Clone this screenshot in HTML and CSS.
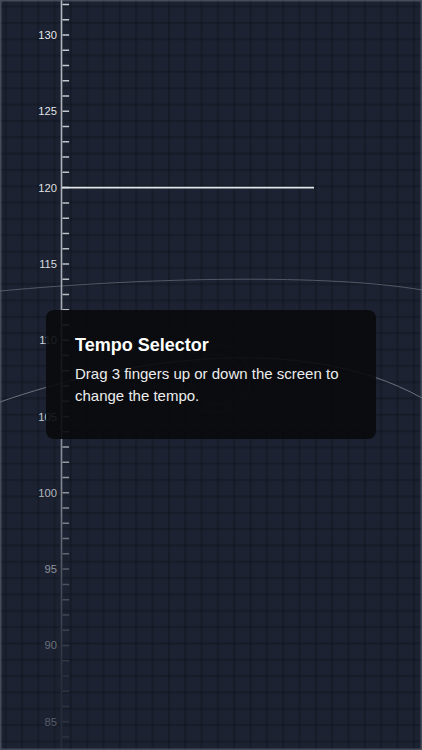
FILE: index.html
```html
<!DOCTYPE html>
<html>
<head>
<meta charset="utf-8">
<link rel="stylesheet" href="styles.css">
</head>
<body>
<div class="screen">
  <svg class="chart" width="422" height="750" viewBox="0 0 422 750">
    <defs>
      <linearGradient id="fadeText" gradientUnits="userSpaceOnUse" x1="0" y1="0" x2="0" y2="750">
        <stop offset="0" stop-color="#eceef1"/>
        <stop offset="0.3" stop-color="#e2e4e8"/>
        <stop offset="0.56" stop-color="#c9ccd2"/>
        <stop offset="0.66" stop-color="#b2b6be"/>
        <stop offset="0.76" stop-color="#8d929c"/>
        <stop offset="0.86" stop-color="#6a707c"/>
        <stop offset="0.97" stop-color="#535968"/>
      </linearGradient>
      <linearGradient id="fadeLine" gradientUnits="userSpaceOnUse" x1="0" y1="0" x2="0" y2="750">
        <stop offset="0" stop-color="#b4b8bf"/>
        <stop offset="0.4" stop-color="#a8acb4"/>
        <stop offset="0.66" stop-color="#80858f"/>
        <stop offset="0.78" stop-color="#454b58"/>
        <stop offset="0.92" stop-color="#272d39"/>
      </linearGradient>
      <linearGradient id="fadeTick" gradientUnits="userSpaceOnUse" x1="0" y1="0" x2="0" y2="750">
        <stop offset="0" stop-color="#c8cbd1"/>
        <stop offset="0.45" stop-color="#b8bcc3"/>
        <stop offset="0.66" stop-color="#8d929b"/>
        <stop offset="0.78" stop-color="#4a505c"/>
        <stop offset="0.9" stop-color="#2d333f"/>
      </linearGradient>
    </defs>

    <path class="arc" d="M0 291 C150 277 330 274 422 290"/>
    <path class="arc arc-low" d="M0 402 C120 360 300 330 422 398"/>
    <circle class="ring" cx="216" cy="379" r="25"/>
    <circle class="ring" cx="216" cy="379" r="34"/>

    <line x1="61.5" y1="0" x2="61.5" y2="750" stroke="url(#fadeLine)" stroke-width="1.6"/>
    <line x1="65.8" y1="3.75" x2="65.8" y2="750" stroke="url(#fadeTick)" stroke-width="6.6" stroke-dasharray="1.5 13.76"/>

    <line class="mark" x1="62" y1="187.6" x2="314" y2="187.6"/>

    <g class="labels" fill="url(#fadeText)">
      <text x="57" y="35">130</text>
      <text x="57" y="111.3">125</text>
      <text x="57" y="187.6">120</text>
      <text x="57" y="263.9">115</text>
      <text x="57" y="340.2">110</text>
      <text x="57" y="416.5">105</text>
      <text x="57" y="492.8">100</text>
      <text x="57" y="569.1">95</text>
      <text x="57" y="645.4">90</text>
      <text x="57" y="721.7">85</text>
    </g>
  </svg>

  <div class="tip">
    <h1 class="tip-title">Tempo Selector</h1>
    <p class="tip-text">Drag 3 fingers up or down the screen to change the tempo.</p>
  </div>
</div>
</body>
</html>
```

FILE: styles.css
```css
html, body {
  margin: 0;
  padding: 0;
  background: #1b2130;
}

.screen {
  position: relative;
  width: 422px;
  height: 750px;
  overflow: hidden;
  background-color: #1c2231;
  background-image:
    linear-gradient(to right, rgba(10, 13, 20, 0.32) 0, rgba(10, 13, 20, 0.32) 1px, rgba(10, 13, 20, 0) 2.8px),
    linear-gradient(to bottom, rgba(10, 13, 20, 0.32) 0, rgba(10, 13, 20, 0.32) 1px, rgba(10, 13, 20, 0) 2.8px);
  background-size: 16.34px 16.34px;
  background-position: 4.6px 5.6px;
  font-family: "Liberation Sans", Arial, sans-serif;
}

.screen::after {
  content: "";
  position: absolute;
  inset: 0;
  box-shadow: inset 0 0 0 1.5px rgba(110, 116, 130, 0.5);
  pointer-events: none;
}

.chart {
  display: block;
}

.arc {
  fill: none;
  stroke: #525866;
  stroke-width: 1;
}

.arc-low {
  stroke: #6b717d;
}

.ring {
  fill: none;
  stroke: #3a404c;
  stroke-width: 1;
}

.mark {
  stroke: #e2e5ea;
  stroke-width: 1.8;
}

.labels text {
  font-family: "Liberation Sans", Arial, sans-serif;
  font-size: 11.2px;
  text-anchor: end;
  dominant-baseline: central;
}

.tip {
  position: absolute;
  left: 46px;
  top: 310px;
  width: 330px;
  height: 129px;
  box-sizing: border-box;
  padding: 24px 20px 0 29px;
  border-radius: 8px;
  background: rgba(9, 10, 12, 0.9);
  color: #f2f2f2;
}

.tip-title {
  margin: 0 0 7px 0;
  font-size: 18px;
  line-height: 22px;
  font-weight: bold;
  color: #ffffff;
}

.tip-text {
  margin: 0;
  font-size: 15px;
  line-height: 22px;
  color: #ececec;
}
```
